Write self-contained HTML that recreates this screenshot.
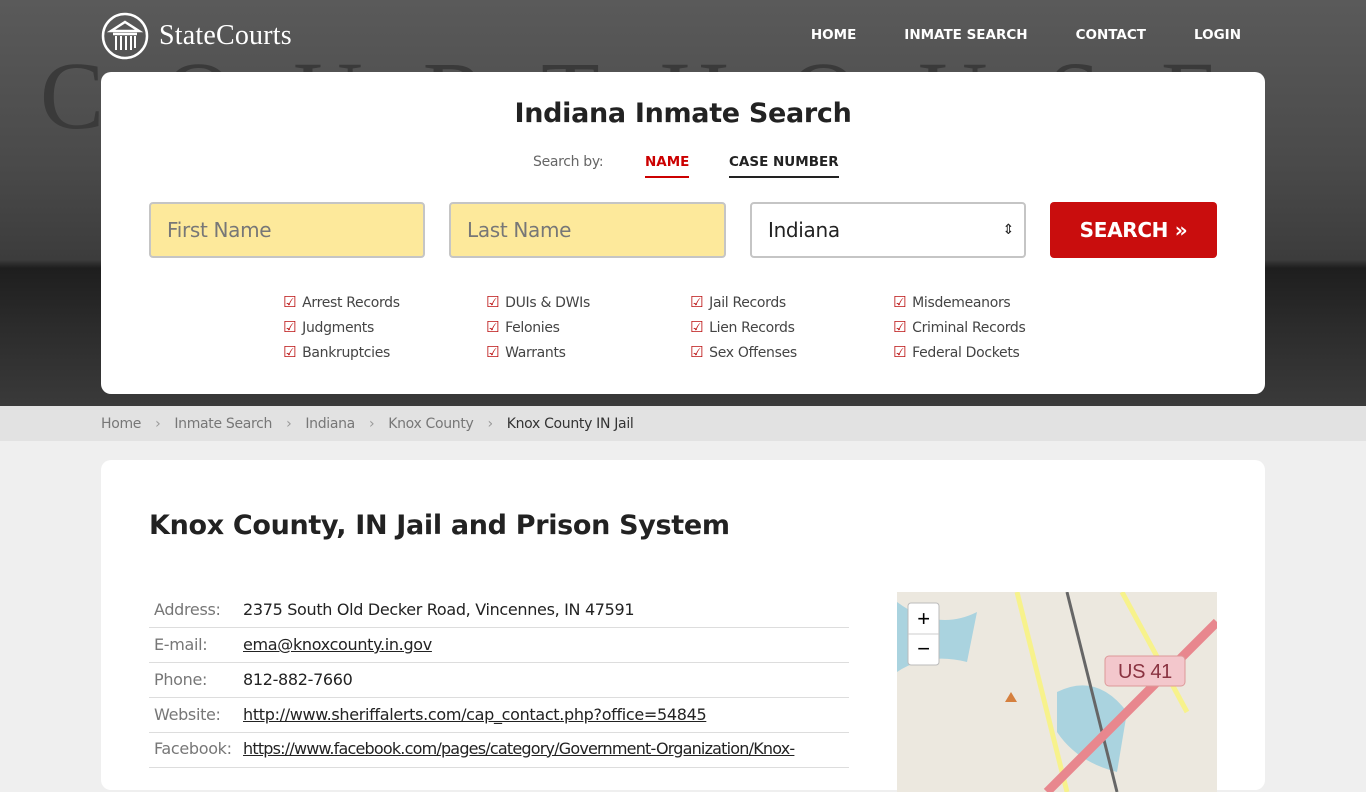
<!DOCTYPE html>
<html><head><meta charset="utf-8"><style>
*{box-sizing:border-box;margin:0;padding:0}
body{width:1366px;height:768px;overflow:hidden;background:#efefef;font-family:"DejaVu Sans","Liberation Sans",sans-serif;color:#222;letter-spacing:-0.02em}
.hero{position:absolute;left:0;top:0;width:1366px;height:406px;background:linear-gradient(180deg,#5a5a5a 0,#4a4a4a 40%,#3c3c3c 64%,#1e1e1e 66%,#2b2b2b 80%,#3a3a3a 100%)}
.hero .big{position:absolute;top:40px;left:40px;font-family:"Liberation Serif",serif;font-size:96px;color:#3a3a3a;letter-spacing:60px}
.logo{position:absolute;left:101px;top:12px;display:flex;align-items:center;color:#fff}
.logo span{font-family:"Liberation Serif",serif;font-size:28px;margin-left:10px;letter-spacing:0.2px}
.nav{position:absolute;top:27px;right:125px;display:flex;gap:48px;color:#fff;font-size:13.5px;font-weight:bold;letter-spacing:0}
.card{position:absolute;left:101px;top:72px;width:1164px;height:322px;background:#fff;border-radius:10px}
h1{position:absolute;top:26px;width:100%;text-align:center;font-size:27px;font-weight:bold}
.by{position:absolute;top:82px;font-size:14px;color:#666}
.tab{position:absolute;top:82px;font-size:13.5px;font-weight:bold;padding-bottom:6px;letter-spacing:0}
.inp{position:absolute;top:130px;height:56px;border:2px solid #c5c5c5;border-radius:4px;background:#fde99b;font-size:20px;color:#777;padding:0 16px;line-height:52px}
.btn{position:absolute;left:949px;top:130px;width:167px;height:56px;background:#c90d0d;border-radius:4px;color:#fff;font-weight:bold;font-size:20px;text-align:center;line-height:56px}
.chk{position:absolute;font-size:14px;color:#444;line-height:24px}
.chk div:before{content:"☑";color:#b11;margin-right:6px;font-size:15px}
.bc{position:absolute;top:406px;left:0;width:1366px;height:35px;background:#e2e2e2;font-size:14px;color:#777;line-height:36px;padding-left:101px}
.bc b{font-weight:normal;margin:0 14px;color:#999}
.main{position:absolute;left:101px;top:460px;width:1164px;height:330px;background:#fff;border-radius:10px}
h2{position:absolute;left:48px;top:50px;font-size:27px;font-weight:bold}
table{position:absolute;left:48px;top:132px;width:700px;border-collapse:collapse;font-size:16px}
td{height:35px;border-bottom:1px solid #ddd;padding-left:5px;color:#222;white-space:nowrap}
td:first-child{color:#777;width:89px}
a{color:#222;text-decoration:underline}
.map{position:absolute;left:796px;top:132px;width:320px;height:200px;background:#ece8df;overflow:hidden}
</style></head><body>
<div class="hero"><div class="big">COURTHOUSE</div></div>
<div class="logo"><svg width="48" height="48" viewBox="0 0 48 48" fill="none" stroke="#fff" stroke-width="2.5"><circle cx="24" cy="24" r="22"/><path d="M10 19 L24 10 L38 19 Z M12 22 H36" /><path d="M15 24v14M20 24v14M25 24v14M30 24v14M34 24v12" stroke-width="2"/></svg><span>StateCourts</span></div>
<div class="nav"><span>HOME</span><span>INMATE SEARCH</span><span>CONTACT</span><span>LOGIN</span></div>
<div class="card">
<h1>Indiana Inmate Search</h1>
<div class="by" style="left:432px">Search by:</div>
<div class="tab" style="left:544px;color:#c00;border-bottom:2px solid #c00">NAME</div>
<div class="tab" style="left:628px;border-bottom:2px solid #222">CASE NUMBER</div>
<div class="inp" style="left:48px;width:276px">First Name</div>
<div class="inp" style="left:348px;width:277px">Last Name</div>
<div class="inp" style="left:649px;width:276px;background:#fff;color:#222">Indiana<span style="position:absolute;right:10px;font-size:14px">⇕</span></div>
<div class="btn">SEARCH »</div>
<div class="chk" style="left:182px;top:218px"><div>Arrest Records</div><div>Judgments</div><div>Bankruptcies</div></div>
<div class="chk" style="left:385px;top:218px"><div>DUIs &amp; DWIs</div><div>Felonies</div><div>Warrants</div></div>
<div class="chk" style="left:589px;top:218px"><div>Jail Records</div><div>Lien Records</div><div>Sex Offenses</div></div>
<div class="chk" style="left:792px;top:218px"><div>Misdemeanors</div><div>Criminal Records</div><div>Federal Dockets</div></div>
</div>
<div class="bc">Home<b>›</b>Inmate Search<b>›</b>Indiana<b>›</b>Knox County<b>›</b><span style="color:#333">Knox County IN Jail</span></div>
<div class="main">
<h2>Knox County, IN Jail and Prison System</h2>
<table>
<tr><td>Address:</td><td>2375 South Old Decker Road, Vincennes, IN 47591</td></tr>
<tr><td>E-mail:</td><td><a>ema@knoxcounty.in.gov</a></td></tr>
<tr><td>Phone:</td><td>812-882-7660</td></tr>
<tr><td>Website:</td><td><a>http://www.sheriffalerts.com/cap_contact.php?office=54845</a></td></tr>
<tr><td style="vertical-align:top;padding-top:6px">Facebook:</td><td style="vertical-align:top;padding-top:6px;letter-spacing:-0.05em"><a>https://www.facebook.com/pages/category/Government-Organization/Knox-</a></td></tr>
</table>
<div class="map"><svg width="320" height="200">
<path d="M0 10 Q40 40 80 20 L70 70 Q30 60 0 80Z" fill="#aad3df"/><path d="M160 100 Q200 80 230 120 L220 180 Q180 170 160 140Z" fill="#aad3df"/>
<path d="M120 0 L170 200" stroke="#f7f28c" stroke-width="5"/><path d="M225 0 L290 120" stroke="#f7f28c" stroke-width="5"/>
<path d="M170 0 L220 200" stroke="#666" stroke-width="3"/>
<path d="M150 200 L320 30" stroke="#e8878e" stroke-width="9"/>
<rect x="208" y="64" width="80" height="30" rx="4" fill="#f3c7cc" stroke="#d99"/><text x="248" y="86" text-anchor="middle" font-size="20" fill="#8a3341" font-family="Liberation Sans">US 41</text>
<path d="M108 110 l6 -10 l6 10z" fill="#d5803f"/>
<rect x="11" y="11" width="31" height="62" rx="3" fill="#fff" stroke="#bbb"/><line x1="11" y1="42" x2="42" y2="42" stroke="#ccc"/>
<text x="26.5" y="34" text-anchor="middle" font-size="22" font-family="Liberation Sans">+</text><text x="26.5" y="64" text-anchor="middle" font-size="22" font-family="Liberation Sans">−</text>
</svg></div>
</div>
</body></html>
